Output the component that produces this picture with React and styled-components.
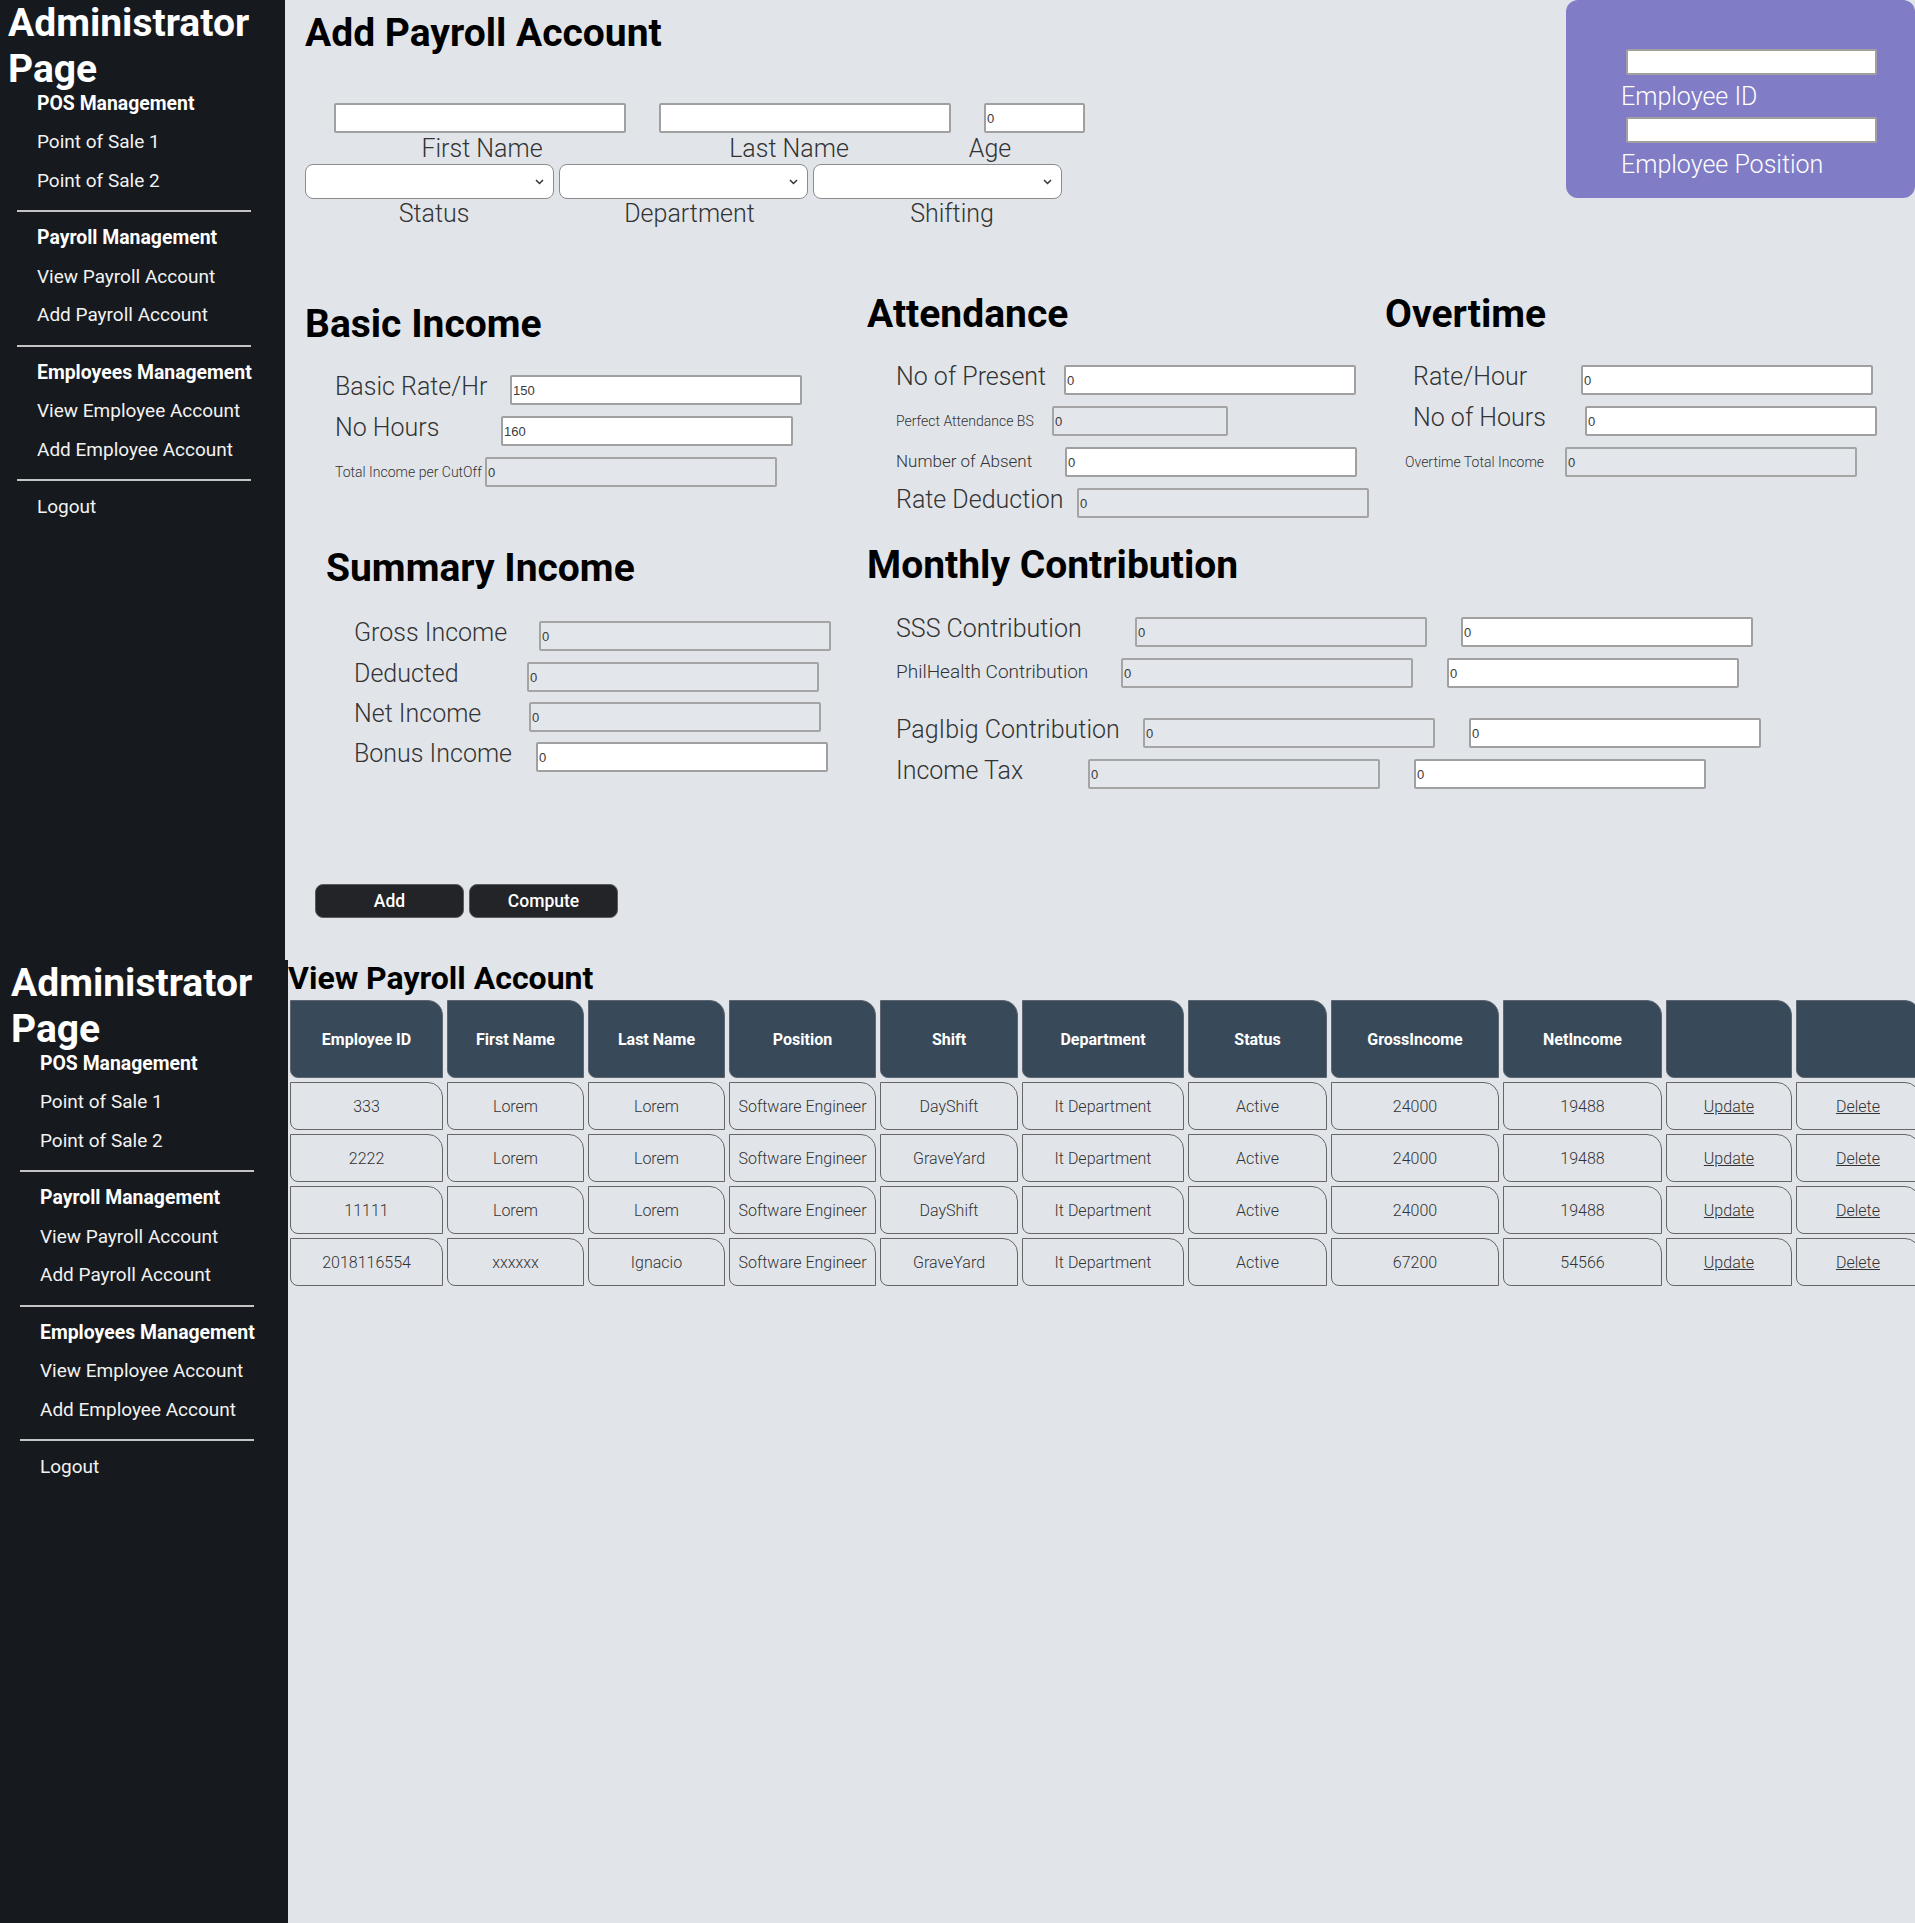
import React from "react";
import styled, { createGlobalStyle } from "styled-components";

const GlobalStyle = createGlobalStyle`
  html, body { margin: 0; padding: 0; overflow: hidden; }
  body { background: #e1e5ea; font-family: Roboto, "Noto Sans", Arial, sans-serif; }
`;

const Page = styled.div`
  display: flex;
  flex-direction: column;
  width: 1915px;
  height: 1923px;
  overflow: hidden;
  background: #e1e5ea;
`;

const Screen = styled.div`
  display: flex;
  flex: ${(p) => (p.$h ? "none" : "1")};
  height: ${(p) => (p.$h ? `${p.$h}px` : "auto")};
  min-height: 0;
`;

/* ---------- Sidebar ---------- */
const Side = styled.aside`
  flex: none;
  width: ${(p) => p.$w}px;
  box-sizing: border-box;
  padding-left: ${(p) => p.$shift}px;
  background: #16191d;
  color: #fff;
`;

const Brand = styled.h1`
  margin: 0 0 -7.4px;
  padding-left: 8px;
  font-size: 39px;
  font-weight: 700;
  line-height: 46px;
  color: #fff;
`;

const NavGroup = styled.div`
  display: flex;
  flex-direction: column;
  padding-left: 37px;
`;

const NavHead = styled.div`
  font-size: 19.4px;
  font-weight: 700;
  line-height: 38.5px;
  white-space: nowrap;
`;

const NavLink = styled.a`
  font-size: 19px;
  font-weight: 400;
  line-height: 38.5px;
  color: #f2f2f2;
  text-decoration: none;
  white-space: nowrap;
`;

const Rule = styled.div`
  width: 234px;
  height: 2px;
  margin: 10px 0 7px 17px;
  background: #c4c4c4;
`;

const navGroups = [
  { head: "POS Management", links: ["Point of Sale 1", "Point of Sale 2"] },
  { head: "Payroll Management", links: ["View Payroll Account", "Add Payroll Account"] },
  { head: "Employees Management", links: ["View Employee Account", "Add Employee Account"] },
  { head: null, links: ["Logout"] },
];

function Sidebar({ width, shift }) {
  return (
    <Side $w={width} $shift={shift}>
      <Brand>
        Administrator
        <br />
        Page
      </Brand>
      {navGroups.map((g, i) => (
        <React.Fragment key={i}>
          {i > 0 && <Rule />}
          <NavGroup>
            {g.head && <NavHead>{g.head}</NavHead>}
            {g.links.map((l) => (
              <NavLink key={l} href="#">
                {l}
              </NavLink>
            ))}
          </NavGroup>
        </React.Fragment>
      ))}
    </Side>
  );
}

/* ---------- Main (form) ---------- */
const Main = styled.main`
  flex: 1;
  min-width: 0;
  display: flex;
  flex-direction: column;
  padding-left: ${(p) => p.$pad || 0}px;
  overflow: hidden;
`;

const HeadRow = styled.div`
  display: flex;
  align-items: flex-start;
`;

const HeadForm = styled.div`
  display: flex;
  flex-direction: column;
  padding-top: 10px;
`;

const PageTitle = styled.h1`
  margin: 0;
  font-size: 39px;
  font-weight: 700;
  line-height: 46px;
  color: #000;
`;

const InputLine = styled.div`
  display: flex;
  gap: 33px;
  margin-top: 47px;
  padding-left: 29px;
`;

const TextBox = styled.input`
  box-sizing: border-box;
  width: ${(p) => p.$w || 292}px;
  height: ${(p) => p.$h || 30}px;
  margin: 0;
  padding: 0 1px;
  border: 2px solid ${(p) => (p.$ro ? "#a4a4a4" : "#a0a0a0")};
  border-radius: 2px;
  background: ${(p) => (p.$ro ? "#e3e7eb" : "#fff")};
  font-family: "Liberation Sans", Arial, sans-serif;
  font-size: 13px;
  color: #3a3a3a;
  flex: none;
  outline: none;
`;

const CaptionLine = styled.div`
  display: flex;
  margin-top: ${(p) => p.$mt}px;
  padding-left: ${(p) => p.$pl || 0}px;
`;

const Caption = styled.div`
  width: ${(p) => p.$w}px;
  text-align: center;
  font-size: 25px;
  font-weight: 300;
  line-height: 28px;
  color: #333;
`;

const SelectLine = styled.div`
  display: flex;
  gap: 5px;
  margin-top: 1px;
`;

const SelectBox = styled.div`
  box-sizing: border-box;
  width: 249px;
  height: 35px;
  display: flex;
  align-items: center;
  justify-content: flex-end;
  padding-right: 9px;
  border: 1px solid #8c8c8c;
  border-radius: 8px;
  background: #fff;
`;

const Chevron = () => (
  <svg width="9" height="6" viewBox="0 0 9 6" aria-hidden="true">
    <path d="M1 1 L4.5 4.5 L8 1" fill="none" stroke="#333" strokeWidth="1.5" />
  </svg>
);

const IdCard = styled.div`
  margin-left: auto;
  width: 349px;
  height: 198px;
  box-sizing: border-box;
  padding: 49px 0 0 60px;
  display: flex;
  flex-direction: column;
  align-items: flex-start;
  background: #807cc6;
  border-radius: 12px;
`;

const CardCaption = styled.div`
  margin: 8px 0 7px -5px;
  font-size: 25px;
  font-weight: 300;
  line-height: 27px;
  color: #fff;
`;

const SectionRow = styled.div`
  display: flex;
  align-items: flex-start;
  margin-top: ${(p) => p.$mt}px;
`;

const Section = styled.section`
  flex: ${(p) => (p.$w ? "none" : "1")};
  width: ${(p) => (p.$w ? `${p.$w}px` : "auto")};
  padding-top: ${(p) => p.$pt || 0}px;
  display: flex;
  flex-direction: column;
`;

const SectionTitle = styled.h2`
  margin: 0;
  padding-left: ${(p) => p.$indent || 0}px;
  font-size: 39px;
  font-weight: 700;
  line-height: 46px;
  color: #000;
`;

const FieldList = styled.div`
  display: flex;
  flex-direction: column;
  padding-left: ${(p) => p.$indent}px;
`;

const Field = styled.div`
  display: flex;
  align-items: baseline;
  margin-top: ${(p) => p.$mt}px;
  margin-left: ${(p) => p.$shift || 0}px;
`;

const labelSizes = { L: 25, M: 17, P: 19, S: 14 };

const FieldLabel = styled.label`
  flex: none;
  width: ${(p) => p.$w}px;
  font-size: ${(p) => labelSizes[p.$size]}px;
  font-weight: 300;
  line-height: 20px;
  color: #333;
  white-space: nowrap;
`;

const SecondBox = styled(TextBox)`
  margin-left: ${(p) => p.$gap}px;
`;

const ButtonRow = styled.div`
  display: flex;
  gap: 5px;
  margin-top: 95px;
  padding-left: 10px;
`;

const ActionButton = styled.button`
  width: 149px;
  height: 34px;
  border: 1px solid #5c5c5c;
  border-radius: 8px;
  background: #232428;
  color: #fff;
  font-family: Roboto, Arial, sans-serif;
  font-size: 17.5px;
  font-weight: 500;
  cursor: pointer;
`;

const basicFields = [
  { label: "Basic Rate/Hr", size: "L", lw: 175, value: "150", mt: 28 },
  { label: "No Hours", size: "L", lw: 166, value: "160", mt: 11 },
  { label: "Total Income per CutOff", size: "S", lw: 150, value: "0", ro: true, mt: 11 },
];

const attendanceFields = [
  { label: "No of Present", size: "L", lw: 168, value: "0", mt: 28 },
  { label: "Perfect Attendance BS", size: "S", lw: 156, value: "0", ro: true, w: 176, mt: 11 },
  { label: "Number of Absent", size: "M", lw: 169, value: "0", mt: 11 },
  { label: "Rate Deduction", size: "L", lw: 181, value: "0", ro: true, mt: 11 },
];

const overtimeFields = [
  { label: "Rate/Hour", size: "L", lw: 168, value: "0", mt: 28 },
  { label: "No of Hours", size: "L", lw: 172, value: "0", mt: 11 },
  { label: "Overtime Total Income", size: "S", lw: 160, value: "0", ro: true, mt: 11, shift: -8 },
];

const summaryFields = [
  { label: "Gross Income", size: "L", lw: 185, value: "0", ro: true, mt: 30 },
  { label: "Deducted", size: "L", lw: 173, value: "0", ro: true, mt: 11 },
  { label: "Net Income", size: "L", lw: 175, value: "0", ro: true, mt: 10 },
  { label: "Bonus Income", size: "L", lw: 182, value: "0", mt: 10 },
];

const monthlyFields = [
  { label: "SSS Contribution", size: "L", lw: 239, gap: 34, mt: 29 },
  { label: "PhilHealth Contribution", size: "P", lw: 225, gap: 34, mt: 11 },
  { label: "PagIbig Contribution", size: "L", lw: 247, gap: 34, mt: 30 },
  { label: "Income Tax", size: "L", lw: 192, gap: 34, mt: 11 },
];

function Fields({ items, indent }) {
  return (
    <FieldList $indent={indent}>
      {items.map((f) => (
        <Field key={f.label} $mt={f.mt} $shift={f.shift}>
          <FieldLabel $w={f.lw} $size={f.size}>
            {f.label}
          </FieldLabel>
          <TextBox $w={f.w} $ro={f.ro} readOnly defaultValue={f.value} />
        </Field>
      ))}
    </FieldList>
  );
}

function PayrollForm() {
  return (
    <Main $pad={20}>
      <HeadRow>
        <HeadForm>
          <PageTitle>Add Payroll Account</PageTitle>
          <InputLine>
            <TextBox readOnly defaultValue="" />
            <TextBox readOnly defaultValue="" />
            <TextBox $w={101} readOnly defaultValue="0" />
          </InputLine>
          <CaptionLine $mt={2} $pl={29}>
            <Caption $w={296}>First Name</Caption>
            <Caption $w={318}>Last Name</Caption>
            <Caption $w={84}>Age</Caption>
          </CaptionLine>
          <SelectLine>
            <SelectBox>
              <Chevron />
            </SelectBox>
            <SelectBox>
              <Chevron />
            </SelectBox>
            <SelectBox>
              <Chevron />
            </SelectBox>
          </SelectLine>
          <CaptionLine $mt={1}>
            <Caption $w={258}>Status</Caption>
            <Caption $w={253}>Department</Caption>
            <Caption $w={272}>Shifting</Caption>
          </CaptionLine>
        </HeadForm>
        <IdCard>
          <TextBox $w={251} $h={26} readOnly defaultValue="" />
          <CardCaption>Employee ID</CardCaption>
          <TextBox $w={251} $h={26} readOnly defaultValue="" />
          <CardCaption>Employee Position</CardCaption>
        </IdCard>
      </HeadRow>

      <SectionRow $mt={63}>
        <Section $w={562} $pt={10}>
          <SectionTitle>Basic Income</SectionTitle>
          <Fields items={basicFields} indent={30} />
        </Section>
        <Section $w={518}>
          <SectionTitle>Attendance</SectionTitle>
          <Fields items={attendanceFields} indent={29} />
        </Section>
        <Section>
          <SectionTitle>Overtime</SectionTitle>
          <Fields items={overtimeFields} indent={28} />
        </Section>
      </SectionRow>

      <SectionRow $mt={24}>
        <Section $w={562} $pt={3}>
          <SectionTitle $indent={21}>Summary Income</SectionTitle>
          <Fields items={summaryFields} indent={49} />
        </Section>
        <Section>
          <SectionTitle>Monthly Contribution</SectionTitle>
          <FieldList $indent={29}>
            {monthlyFields.map((f) => (
              <Field key={f.label} $mt={f.mt}>
                <FieldLabel $w={f.lw} $size={f.size}>
                  {f.label}
                </FieldLabel>
                <TextBox $ro readOnly defaultValue="0" />
                <SecondBox $gap={f.gap} readOnly defaultValue="0" />
              </Field>
            ))}
          </FieldList>
        </Section>
      </SectionRow>

      <ButtonRow>
        <ActionButton type="button">Add</ActionButton>
        <ActionButton type="button">Compute</ActionButton>
      </ButtonRow>
    </Main>
  );
}

/* ---------- Table ---------- */
const TableTitle = styled.h2`
  margin: 0;
  font-size: 32px;
  font-weight: 700;
  line-height: 36px;
  color: #000;
  white-space: nowrap;
`;

const Grid = styled.table`
  flex: none;
  width: ${(p) => p.$w}px;
  margin-left: -2px;
  border-collapse: separate;
  border-spacing: 4px;
  table-layout: fixed;
`;

const Col = styled.col`
  width: ${(p) => p.$w}px;
`;

const HeadLine = styled.tr`
  height: 78px;
`;

const BodyLine = styled.tr`
  height: 48px;
`;

const HeadCell = styled.th`
  box-sizing: border-box;
  padding: 0;
  border: 1px solid #5d6670;
  border-radius: 0 15px 0 8px;
  background: #384a59;
  color: #fff;
  font-size: 16px;
  font-weight: 700;
  text-align: center;
  white-space: nowrap;
`;

const DataCell = styled.td`
  box-sizing: border-box;
  padding: 0;
  border: 1px solid #666;
  border-radius: 0 15px 0 8px;
  color: #333;
  font-size: 16px;
  font-weight: 300;
  text-align: center;
  white-space: nowrap;
`;

const RowLink = styled.a`
  color: #333;
  text-decoration: underline;
`;

const colWidths = [153, 137, 137, 147, 138, 162, 139, 168, 159, 126, 124];
const headers = [
  "Employee ID",
  "First Name",
  "Last Name",
  "Position",
  "Shift",
  "Department",
  "Status",
  "GrossIncome",
  "NetIncome",
  "",
  "",
];
const rows = [
  ["333", "Lorem", "Lorem", "Software Engineer", "DayShift", "It Department", "Active", "24000", "19488"],
  ["2222", "Lorem", "Lorem", "Software Engineer", "GraveYard", "It Department", "Active", "24000", "19488"],
  ["11111", "Lorem", "Lorem", "Software Engineer", "DayShift", "It Department", "Active", "24000", "19488"],
  ["2018116554", "xxxxxx", "Ignacio", "Software Engineer", "GraveYard", "It Department", "Active", "67200", "54566"],
];

function PayrollTable() {
  const total = colWidths.reduce((a, b) => a + b, 0) + 4 * (colWidths.length + 1);
  return (
    <Main>
      <TableTitle>View Payroll Account</TableTitle>
      <Grid $w={total}>
        <colgroup>
          {colWidths.map((w, i) => (
            <Col key={i} $w={w} />
          ))}
        </colgroup>
        <thead>
          <HeadLine>
            {headers.map((h, i) => (
              <HeadCell key={i}>{h}</HeadCell>
            ))}
          </HeadLine>
        </thead>
        <tbody>
          {rows.map((r, ri) => (
            <BodyLine key={ri}>
              {r.map((c, ci) => (
                <DataCell key={ci}>{c}</DataCell>
              ))}
              <DataCell>
                <RowLink href="#">Update</RowLink>
              </DataCell>
              <DataCell>
                <RowLink href="#">Delete</RowLink>
              </DataCell>
            </BodyLine>
          ))}
        </tbody>
      </Grid>
    </Main>
  );
}

export default function App() {
  return (
    <>
      <GlobalStyle />
      <Page>
        <Screen $h={960}>
          <Sidebar width={285} shift={0} />
          <PayrollForm />
        </Screen>
        <Screen>
          <Sidebar width={288} shift={3} />
          <PayrollTable />
        </Screen>
      </Page>
    </>
  );
}
